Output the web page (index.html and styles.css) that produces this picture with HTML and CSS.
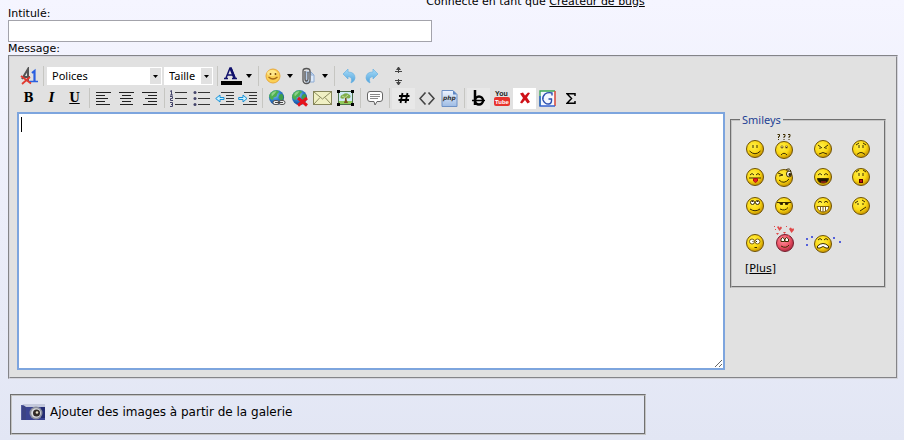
FILE: index.html
```html
<!DOCTYPE html>
<html lang="fr">
<head>
<meta charset="UTF-8">
<meta name="viewport" content="width=device-width, initial-scale=1.0">
<title>Message</title>
<link rel="stylesheet" href="styles.css">
</head>
<body>

<svg class="defs" width="0" height="0" aria-hidden="true">
    <defs>
        <radialGradient id="yellow" cx="40%" cy="35%" r="65%">
            <stop offset="0" stop-color="#fff04a"/>
            <stop offset="0.6" stop-color="#fbd914"/>
            <stop offset="1" stop-color="#c99500"/>
        </radialGradient>
        <radialGradient id="pink" cx="40%" cy="35%" r="65%">
            <stop offset="0" stop-color="#ff8f9c"/>
            <stop offset="0.6" stop-color="#ee5669"/>
            <stop offset="1" stop-color="#b52a40"/>
        </radialGradient>
        <radialGradient id="earth" cx="38%" cy="30%" r="75%">
            <stop offset="0" stop-color="#8fc8f5"/>
            <stop offset="0.5" stop-color="#2f7fd0"/>
            <stop offset="1" stop-color="#0d3f8c"/>
        </radialGradient>
        <linearGradient id="sky" x1="0" y1="0" x2="0" y2="1">
            <stop offset="0" stop-color="#a9dcf8"/>
            <stop offset="1" stop-color="#4fa3dc"/>
        </linearGradient>
        <linearGradient id="sheet" x1="0" y1="0" x2="0" y2="1">
            <stop offset="0" stop-color="#eef5ff"/>
            <stop offset="1" stop-color="#9dbbe4"/>
        </linearGradient>
    </defs>
    <symbol id="face" viewBox="0 0 20 20">
        <circle cx="10" cy="10" r="8.500" fill="url(#yellow)" stroke="#6e5208"/>
    </symbol>
    <symbol id="globe" viewBox="0 0 18 18">
        <circle cx="9" cy="9" r="8" fill="url(#earth)"/>
        <path d="M3 4Q6 1 10 1.500L12 3L10 5L9 8L6 9L5 12L2 10Q0 7 3 4Z" fill="#4caf50"/>
        <path d="M12 6L15 5Q17 8 16 11L13 12L11 9Z" fill="#3f9f48"/>
        <path d="M3.500 5Q6 2 9 2.500L7 5L4 8Z" fill="#a8dfa2" opacity="0.7"/>
    </symbol>
</svg>

<header class="session">
    <p>Connecté en tant que <a href="#">Créateur de bugs</a></p>
</header>

<form class="post">
    <label for="title">Intitulé:</label>
    <input type="text" id="title" class="title">
    <label for="message">Message:</label>

    <div class="editor">
        <div class="toolbar">
            <div class="row">
                <button type="button" aria-label="Supprimer le format"><svg width="18" height="18" viewBox="0 0 18 18"><path d="M2 12L8 2V14M3 10H10" fill="none" stroke="#555" stroke-width="2"/><path d="M12 6L14.500 4V14" fill="none" stroke="#2a5fe0" stroke-width="2.200"/><path d="M9 14.500H18" stroke="#2a5fe0" stroke-width="1.500"/><path d="M1 9L11 16.500M10 10L2 17" stroke="#e23a30" stroke-width="1.800"/></svg></button>
                <span class="sep"></span>
                <select class="font-list" aria-label="Polices"><option>Polices</option></select>
                <select class="size-list" aria-label="Taille"><option>Taille</option></select>
                <span class="sep"></span>
                <button type="button" aria-label="Couleur"><svg width="21" height="20" viewBox="0 0 21 20"><path d="M5 12L9 2H10L14 12M6.500 9H12M3 12.500H7M11 12.500H16" fill="none" stroke="#10106c" stroke-width="1.500"/><path d="M9.500 2L13.500 12" stroke="#10106c" stroke-width="2.500"/><path d="M0 15H21V19H0Z"/></svg></button>
                <button type="button" class="more" aria-label="Autres couleurs"><svg width="6" height="4" viewBox="0 0 6 4"><path d="M0 0H6L3 4Z"/></svg></button>
                <span class="sep"></span>
                <button type="button" aria-label="Smileys"><svg width="16" height="16" viewBox="0 0 16 16"><circle cx="8" cy="8" r="7" fill="#fbd055" stroke="#e8a93c"/><ellipse cx="7" cy="5" rx="5" ry="3" fill="#fff0a0" opacity="0.7"/><path d="M5.500 5V7M10.500 5V7" stroke="#805012" stroke-width="1.500"/><path d="M3.500 9Q8 13 12.500 9" fill="none" stroke="#a86b18" stroke-width="1.200"/></svg></button>
                <button type="button" class="more" aria-label="Autres smileys"><svg width="6" height="4" viewBox="0 0 6 4"><path d="M0 0H6L3 4Z"/></svg></button>
                <button type="button" aria-label="Pièce jointe"><svg width="16" height="18" viewBox="0 0 16 18"><path d="M6 5H11L14 8V15H6Z" fill="#dceafc" stroke="#8eacd4"/><path d="M11 5V8H14" fill="none" stroke="#8eacd4"/><path d="M8 5V12Q8 14 6.500 14T5 12V4M3 5V13Q3 16.500 6.500 16.500T10 13V4Q10 1.500 6.500 1.500T3 4V6" fill="none" stroke="#555" stroke-width="1.300"/></svg></button>
                <button type="button" class="more" aria-label="Autres fichiers"><svg width="6" height="4" viewBox="0 0 6 4"><path d="M0 0H6L3 4Z"/></svg></button>
                <span class="sep"></span>
                <button type="button" aria-label="Annuler"><svg width="14" height="16" viewBox="0 0 14 16"><path d="M1 6L6 1V4Q13 4 13 10Q13 13 9 15Q11 9 6 8.500V11Z" fill="url(#sky)" stroke="#68b2e2" stroke-width="0.700"/></svg></button>
                <button type="button" aria-label="Rétablir"><svg width="14" height="16" viewBox="0 0 14 16"><path d="M13 6L8 1V4Q1 4 1 10Q1 13 5 15Q3 9 8 8.500V11Z" fill="url(#sky)" stroke="#68b2e2" stroke-width="0.700"/></svg></button>
                <button type="button" class="resize" aria-label="Redimensionner"><svg width="7" height="18" viewBox="0 0 7 18" fill="#444"><path d="M3 0H4L6 3H1ZM3 3H4V4H7V5H4V6H3V5H0V4H3Z"/><path d="M3 18H4L6 15H1ZM3 15H4V14H7V13H4V12H3V13H0V14H3Z"/></svg></button>
            </div>
            <div class="row">
                <button type="button" class="letter bold" aria-label="Gras">B</button>
                <button type="button" class="letter italic" aria-label="Italique">I</button>
                <button type="button" class="letter underline" aria-label="Souligné">U</button>
                <span class="sep"></span>
                <button type="button" aria-label="Gauche"><svg width="15" height="13" viewBox="0 0 15 13"><path d="M0 .5H15M0 3.500H9M0 6.500H12M0 9.500H9M0 12.500H14" stroke="#222"/></svg></button>
                <button type="button" aria-label="Centrer"><svg width="15" height="13" viewBox="0 0 15 13"><path d="M0 .5H15M3 3.500H12M1 6.500H14M3 9.500H12M1 12.500H14" stroke="#222"/></svg></button>
                <button type="button" aria-label="Droite"><svg width="15" height="13" viewBox="0 0 15 13"><path d="M0 .5H15M6 3.500H15M3 6.500H15M6 9.500H15M1 12.500H15" stroke="#222"/></svg></button>
                <span class="sep"></span>
                <button type="button" aria-label="Liste numérotée"><svg width="17" height="17" viewBox="0 0 17 17" fill="none"><path d="M5 2.500H17M5 8.500H17M5 14.500H17" stroke="#333"/><path d="M0 1.500L1.500 .5V5M0 5H3M0 6.500H2.500V8.500H.5V10.500H3M0 12.500H2.500V16.500H0M1 14.500H2.500" stroke="#44446a"/></svg></button>
                <button type="button" aria-label="Liste"><svg width="17" height="17" viewBox="0 0 17 17"><path d="M5 2.500H17M5 8.500H17M5 14.500H17" stroke="#333"/><g fill="#44446a"><circle cx="2" cy="2.500" r="1.500"/><circle cx="2" cy="8.500" r="1.500"/><circle cx="2" cy="14.500" r="1.500"/></g></svg></button>
                <button type="button" aria-label="Diminuer le retrait"><svg width="19" height="13" viewBox="0 0 19 13"><path d="M6 .5H19M11 3.500H19M11 6.500H19M11 9.500H19M5 12.500H19" stroke="#333"/><path d="M.7 6.500L5 3V5.500H9V7.500H5V10Z" fill="#c8efff" stroke="#1691d8"/></svg></button>
                <button type="button" aria-label="Augmenter le retrait"><svg width="19" height="13" viewBox="0 0 19 13"><path d="M6 .5H19M11 3.500H19M11 6.500H19M11 9.500H19M5 12.500H19" stroke="#333"/><path d="M9 6.500L5 3V5.500H.7V7.500H5V10Z" fill="#c8efff" stroke="#1691d8"/></svg></button>
                <span class="sep"></span>
                <button type="button" aria-label="Lien"><svg width="18" height="18" viewBox="0 0 18 18"><use href="#globe" width="17" height="17"/><path d="M8 13.500H14" stroke="#777" stroke-width="1.500"/><rect x="5" y="11.500" width="6" height="4" rx="2" fill="#eee" stroke="#555"/><rect x="11" y="11.500" width="6" height="4" rx="2" fill="#eee" stroke="#555"/><path d="M7 13.500H15" stroke="#444"/></svg></button>
                <button type="button" aria-label="Supprimer le lien"><svg width="18" height="18" viewBox="0 0 18 18"><use href="#globe" width="17" height="17"/><path d="M7 9L16 16.500M16 9L7 16.500" stroke="#e5141c" stroke-width="3"/></svg></button>
                <button type="button" aria-label="Courriel"><svg width="19" height="14" viewBox="0 0 19 14"><rect x=".5" y=".5" width="18" height="13" fill="#f0f0c4" stroke="#85855a"/><path d="M1 1L9.500 8L18 1M1 13L7 6.500M18 13L12 6.500" fill="none" stroke="#8c8c5e"/></svg></button>
                <button type="button" aria-label="Image"><svg width="17" height="16" viewBox="0 0 17 16"><path d="M1.500 1.500H15.500V14.500H1.500Z" fill="#cfeaf6" stroke="#4a704a"/><path d="M2 11H15V14H2Z" fill="#8fca5a"/><path d="M7 13Q8.500 10 8 6H9.500Q9 10 11 13Z" fill="#76501e"/><path d="M3.500 8Q3 5 6 4.500Q9 2 12 4.500Q14.500 5.500 13 8Q11 9 9 7.500Q6 9.500 3.500 8Z" fill="#7fae4c"/><path d="M5 6L8 7.500L11 5" fill="none" stroke="#c4dc96"/><path d="M0 0H3V3H0ZM14 0H17V3H14ZM0 13H3V16H0ZM14 13H17V16H14Z"/></svg></button>
                <span class="sep"></span>
                <button type="button" aria-label="Citation"><svg width="16" height="15" viewBox="0 0 16 15"><path d="M3 .5H13Q15.500 .5 15.500 3V8Q15.500 10.500 13 10.500H10L8 14L7 10.500H3Q.5 10.500 .5 8V3Q.5 .5 3 .5Z" fill="#fff" stroke="#666"/><path d="M3 3.500H13M3 5.500H13M3 7.500H11" stroke="#888"/></svg></button>
                <span class="sep"></span>
                <button type="button" class="pale" aria-label="Code"><svg width="12" height="12" viewBox="0 0 12 12"><path d="M4.500 1L2.500 11M9.500 1L7.500 11M1 4H11.500M.5 8H11" stroke="#000" stroke-width="1.800"/></svg></button>
                <button type="button" aria-label="HTML"><svg width="16" height="13" viewBox="0 0 16 13"><path d="M6.500 .5L1 6.500L6.500 12.500M9.500 .5L15 6.500L9.500 12.500" fill="none" stroke="#444" stroke-width="1.600"/></svg></button>
                <button type="button" aria-label="PHP"><svg width="17" height="17" viewBox="0 0 17 17"><path d="M1 .5H12L16 4.500V16.500H1Z" fill="url(#sheet)" stroke="#6d91c6"/><path d="M12 .5V4.500H16Z" fill="#5c86c4"/><text x="2" y="10" class="php">php</text></svg></button>
                <span class="sep"></span>
                <button type="button" class="pale" aria-label="Barré"><svg width="13" height="16" viewBox="0 0 13 16" fill="none" stroke="#000"><path d="M3 0V15" stroke-width="2.500"/><circle cx="7" cy="10.500" r="4" stroke-width="2.400"/><path d="M0 10.500H13" stroke-width="1.500"/></svg></button>
                <button type="button" aria-label="YouTube"><svg width="16" height="17" viewBox="0 0 16 17"><text x="1" y="6" class="you">You</text><rect x="0" y="7" width="16" height="9" rx="2" fill="#e8332d"/><text x="1" y="14" class="tube">Tube</text></svg></button>
                <button type="button" class="white" aria-label="Supprimer"><svg width="12" height="12" viewBox="0 0 12 12"><path d="M1 1.500L4 .5L6 3.500L9 .5L11 1L8 5.500L11 10L8.500 11.500L6 8L3 11.500L1 10.500L4 6Z" fill="#cf1118"/></svg></button>
                <button type="button" aria-label="Google"><svg width="17" height="17" viewBox="0 0 17 17" fill="none"><path d="M1 1H16V16H1Z" fill="#f4f7ff"/><path d="M1 16V1H16" stroke="#3aa655" stroke-width="1.300"/><path d="M16 1V16" stroke="#d84436" stroke-width="1.500"/><path d="M1 6V16H16" stroke="#3563d1" stroke-width="1.500"/><path d="M13 5.500V3Q9 2 6 4Q3 7 4 10Q6 14.500 10 14Q13 13.500 12.500 9H9.500" stroke="#2b4fae" stroke-width="1.400"/></svg></button>
                <button type="button" aria-label="Symbole"><svg width="10" height="11" viewBox="0 0 10 11"><path d="M9 3V.8H1L5.500 5.500L1 10.200H9V8" fill="none" stroke="#000" stroke-width="1.500"/></svg></button>
            </div>
        </div>

        <div class="panes">
            <textarea id="message" class="message" autofocus></textarea>
            <fieldset class="smileys">
                <legend>Smileys</legend>
                <div class="faces">
                    <button type="button" aria-label="Sourire"><svg viewBox="0 0 20 20"><use href="#face"/><path d="M8 6V9M12 6V9M4.500 12Q10 17.500 15.500 12"/></svg></button>
                    <button type="button" aria-label="Confus"><svg viewBox="0 0 20 20"><path d="M3.500 -4.500H5.500V-2.500H4.500V-1M4.500 0V1M9 -4.500H11V-2.500H10V-1M10 0V1M14 -4.500H16V-2.500H15V-1M15 0V1"/><use href="#face" y="1"/><path class="eye" d="M7 7H9V9H7ZM11.500 7H13.500V9H11.500Z" stroke="#a88a20"/><path d="M8 8V9M12.500 8V9M7 16Q10 12.500 13 16"/></svg></button>
                    <button type="button" aria-label="Fâché"><svg viewBox="0 0 20 20"><use href="#face"/><path d="M5 6L9 9M15 6L11 9M7 8.500V10M13 8.500V10M6 15Q10 12 14 15"/></svg></button>
                    <button type="button" aria-label="Triste"><svg viewBox="0 0 20 20"><use href="#face"/><path d="M5 6L8 4M12 4L15 6M8 6V9M12 6V9M6 15.500Q10 11.500 14 15.500"/></svg></button>

                    <button type="button" aria-label="Tire la langue"><svg viewBox="0 0 20 20"><use href="#face"/><path d="M5 8Q7 5 9 8M11 8Q13 5 15 8M4 11H16"/><path d="M8.500 11.500H12.500V14L10.500 15.500L8.500 14Z" fill="#e82020" stroke="#b01010"/></svg></button>
                    <button type="button" aria-label="Clin d'œil"><svg viewBox="0 0 20 20"><use href="#face" y="1"/><path d="M4 6L9 8L5 9M12 3Q16 0 17 5M5 13Q10 18 15 12"/><ellipse class="eye" cx="15" cy="7" rx="2.500" ry="3"/><path class="dark" d="M15 6.500H16.500V8.500H15Z"/></svg></button>
                    <button type="button" aria-label="Rire"><svg viewBox="0 0 20 20"><use href="#face"/><path d="M5 8Q7 5 9 8M11 8Q13 5 15 8"/><path class="dark" d="M4.500 11.500H15.500Q15 16 10 16T4.500 11.500Z"/><path d="M8 15H13" stroke="#d02424"/></svg></button>
                    <button type="button" aria-label="Surpris"><svg viewBox="0 0 20 20"><use href="#face"/><path d="M5 5L8 3M12 3L15 5M8 6V9M12 6V9"/><rect x="8.500" y="12.500" width="3" height="3" fill="#c01818" stroke="#500"/></svg></button>

                    <button type="button" aria-label="Yeux au ciel"><svg viewBox="0 0 20 20"><use href="#face"/><circle class="eye" cx="7.500" cy="6.500" r="2"/><circle class="eye" cx="12.500" cy="6.500" r="2"/><path d="M7 5.500H8M12 5.500H13M5 13Q10 16.500 15 13"/></svg></button>
                    <button type="button" aria-label="Cool"><svg viewBox="0 0 20 20"><use href="#face"/><path d="M3 6.500H17"/><path class="dark" d="M5.500 6.500H8.500V8.500H6.500ZM11.500 6.500H14.500L13.500 8.500H11.500Z"/><path d="M6 13Q11 15.500 14 11.500"/></svg></button>
                    <button type="button" aria-label="Grand sourire"><svg viewBox="0 0 20 20"><use href="#face"/><path d="M5 6.500Q7 4 9 6.500M11 6.500Q13 4 15 6.500"/><path class="eye" d="M4 10.500H16Q15 16 10 16T4 10.500Z" stroke="#80600c"/><path d="M7.500 11V15M10 11V16M12.500 11V15" stroke="#80600c"/></svg></button>
                    <button type="button" aria-label="Sceptique"><svg viewBox="0 0 20 20"><use href="#face"/><path d="M4 7L7 5M11 4L14 6M7 7V9M12 7V9M9 15L15 11"/></svg></button>

                    <button type="button" aria-label="Ébahi"><svg viewBox="0 0 20 20"><use href="#face"/><circle class="eye" cx="7" cy="8.500" r="2.500" stroke="#80600c"/><circle class="eye" cx="12.500" cy="8.500" r="2.500" stroke="#80600c"/><path d="M8 8V9M11.500 8V9M9.500 14.500H12"/></svg></button>
                    <button type="button" aria-label="Amoureux"><svg viewBox="0 0 20 20"><circle cx="11" cy="10" r="8.500" fill="url(#pink)" stroke="#74202e"/><g fill="#e04848" stroke="none"><path d="M3 -6Q5 -8 5.500 -5Q7 -8 8 -5L5.500 -2ZM15 -4Q17 -7 18 -4Q20 -6 20 -3L17.500 0ZM2 0H5L3.500 2ZM9 -1H12L10.500 1Z"/><path d="M0 -7H1V-6H0ZM1 -4H2V-3H1ZM12 -7H13V-6H12ZM14 2H15V3H14Z"/></g><path class="eye" d="M7 8.500V6Q8.500 3 10.500 6V8.500ZM11 8.500V6Q12.500 3 14.500 6V8.500Z"/><path d="M7 13Q12 16 15 12"/></svg></button>
                    <button type="button" aria-label="Pleure"><svg viewBox="0 0 20 20"><use href="#face" y="1"/><path d="M5 7Q7 4 9 7M11 7Q13 4 15 7"/><path class="eye" d="M4.500 15V13Q10 8 15.500 13V15H13Q10 12 7 15Z"/><path d="M-7 6H-5M-6 5V7M-2 4H0M-1 3V5M-7 12H-5M-6 11V13M20 5H22M21 4V6M26 9H28M27 8V10" stroke="#2637d8"/></svg></button>
                </div>
                <p class="plus">[<a href="#">Plus</a>]</p>
            </fieldset>
        </div>
    </div>

    <div class="gallery">
        <svg width="25" height="17" viewBox="0 0 25 17" aria-hidden="true"><path d="M0 1H24V16H0Z" fill="#3b4492"/><path d="M0 1H5V16H0Z" fill="#525a9c"/><path d="M2 2V16M4 2V16" stroke="#252d6c"/><path d="M1 0H24V3H5Z" fill="#c4c9dc"/><path d="M20 3H24V14H20Z" fill="#232b72"/><circle cx="15" cy="9" r="6.500" fill="#8b8f9d"/><circle cx="15" cy="9" r="4.800" fill="#d8dae0"/><circle cx="15.500" cy="9" r="3.500" fill="#302a26"/><circle cx="16" cy="8.500" r="1.300" fill="#e8dfc4"/></svg>
        <span>Ajouter des images à partir de la galerie</span>
    </div>
</form>

</body>
</html>
```

FILE: styles.css
```css
html {
    min-height: 100%;
    background: linear-gradient(#f5f5ff, #e2e6f4);
}

body {
    margin: 0;
    padding: 0 6px 0 8px;
    font-family: "DejaVu Sans", Verdana, sans-serif;
    font-size: 11px;
    line-height: 13px;
    color: #000;
}

a {
    color: #000;
}

p {
    margin: 0;
}

.defs {
    display: block;
}

.session {
    display: flex;
    align-items: flex-end;
    height: 7px;
    padding-left: 47%;
    line-height: 11px;
}

.post {
    display: flex;
    flex-direction: column;
    align-items: flex-start;
}

.title {
    box-sizing: border-box;
    width: 424px;
    max-width: 100%;
    height: 22px;
    border: 1px solid #a3a3ab;
    background: #fff;
}

.editor {
    box-sizing: border-box;
    align-self: stretch;
    padding: 8px 10px 7px 7px;
    border: 2px groove #d5d5dc;
    background: #e1e1e1;
}

.toolbar {
    margin-bottom: 3px;
}

.row {
    display: flex;
    align-items: center;
    height: 22px;
}

button {
    display: flex;
    align-items: center;
    justify-content: center;
    width: 23px;
    height: 21px;
    padding: 0;
    border: none;
    background: none;
    color: #000;
    cursor: pointer;
}

.sep {
    width: 1px;
    height: 20px;
    margin: 0 2px 0 3px;
    background: #c6c6c2;
}

select {
    appearance: none;
    box-sizing: border-box;
    height: 18px;
    margin: 0 1px;
    padding: 0 14px 2px 5px;
    border: none;
    border-radius: 0;
    font-family: "Noto Sans", Tahoma, sans-serif;
    font-size: 11px;
    color: #000;
    background: #fff url("data:image/svg+xml,%3Csvg xmlns='http://www.w3.org/2000/svg' width='12' height='18'%3E%3Cpath d='M0 1H11V17H0Z' fill='%23e1e1e1'/%3E%3Cpath d='M3 8H8L5.500 11Z'/%3E%3C/svg%3E") no-repeat right center;
}

.font-list {
    width: 115px;
}

.size-list {
    width: 49px;
}

.more {
    width: 12px;
}

.resize {
    margin-left: 4px;
}

.letter {
    font-family: "DejaVu Serif", serif;
    font-size: 12px;
    font-weight: bold;
}

.italic {
    font-style: italic;
}

.underline {
    text-decoration: underline;
}

.pale {
    background: #e8e8e8;
}

.white {
    background: #fff;
}

.php {
    font: italic bold 6px "DejaVu Sans", sans-serif;
    fill: #333;
}

.you {
    font: bold 7px "Liberation Sans", sans-serif;
    fill: #222;
}

.tube {
    font: bold 6px "Liberation Sans", sans-serif;
    fill: #fff;
}

.panes {
    display: flex;
    align-items: flex-start;
    gap: 5px;
}

/* the bar at the top left is the text cursor */
.message {
    flex: 1;
    box-sizing: border-box;
    height: 258px;
    padding: 2px;
    border: 2px solid #7da5de;
    outline: none;
    background: #fff linear-gradient(#000, #000) 2px 3px / 1px 15px no-repeat;
    caret-color: transparent;
    font-family: "DejaVu Sans", Verdana, sans-serif;
    font-size: 12px;
}

.smileys {
    box-sizing: border-box;
    width: 156px;
    height: 175px;
    margin: 1px 0 0;
    padding: 5px 8px 0 12px;
    border: 2px groove #c4c4c4;
}

.smileys legend {
    margin-left: -4px;
    padding: 0 2px;
    font-family: "Noto Sans", Tahoma, sans-serif;
    color: #1c3f94;
}

.faces {
    display: grid;
    grid-template-columns: 22px 28px 42px 26px;
    grid-template-rows: 28px 28px 29px 37px;
    column-gap: 4px;
    align-items: end;
    justify-items: center;
}

.faces button {
    width: 20px;
    height: 20px;
}

.faces svg {
    width: 20px;
    height: 20px;
    overflow: visible;
    fill: none;
    stroke: #3c2c00;
}

.eye {
    fill: #fff;
}

.dark {
    fill: #201800;
}

.plus {
    margin: 9px 0 0 1px;
}

.gallery {
    display: flex;
    align-items: center;
    gap: 4px;
    box-sizing: border-box;
    width: 71.5%;
    height: 41px;
    margin: 15px 0 0 2px;
    padding: 0 9px 4px;
    border: 2px groove #c4c4c4;
    font-size: 12px;
}
```
